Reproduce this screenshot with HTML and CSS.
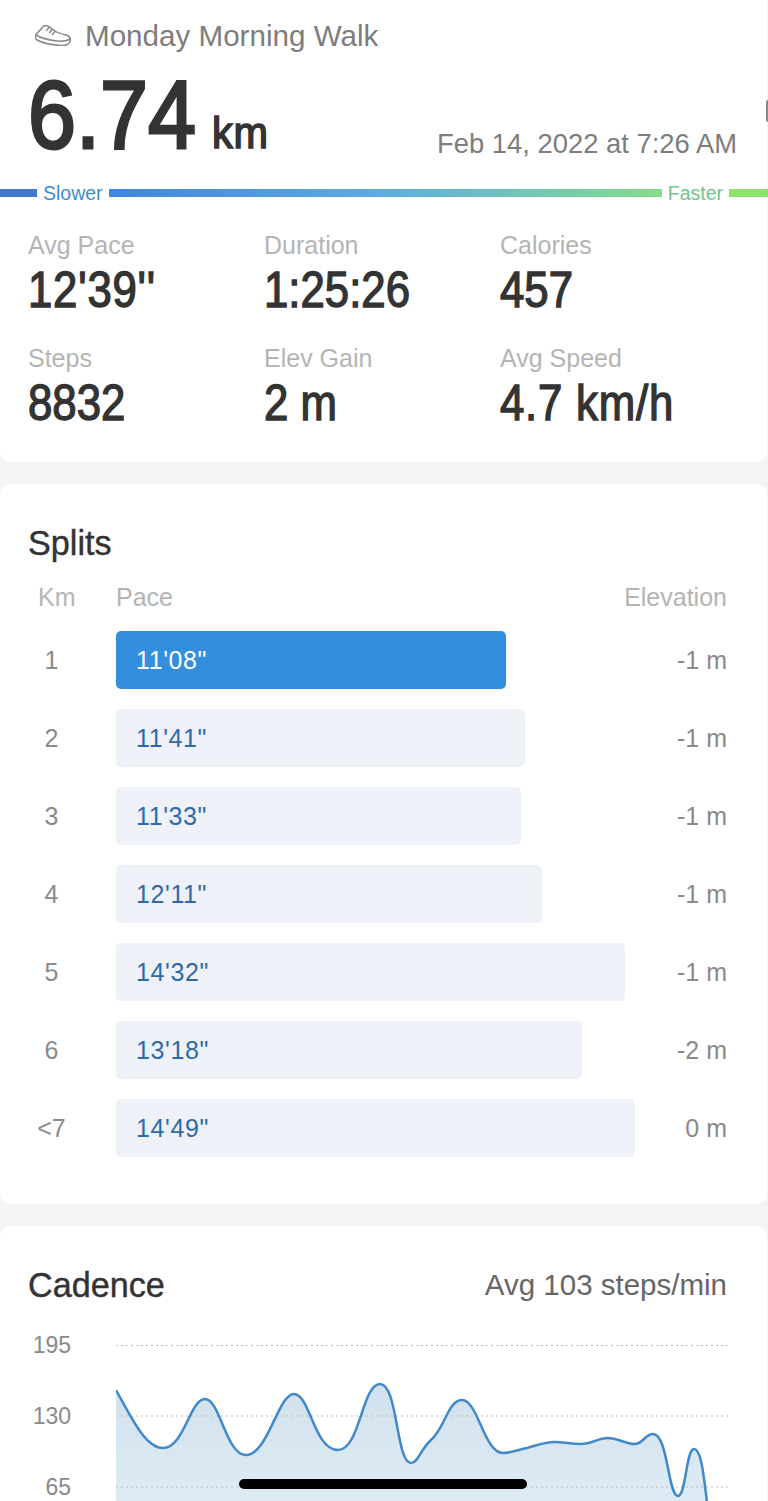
FILE: index.html
```html
<!DOCTYPE html>
<html lang="en">
<head>
    <meta charset="UTF-8">
    <meta name="viewport" content="width=device-width, initial-scale=1.0">
    <title>Monday Morning Walk</title>
    <link rel="stylesheet" href="styles.css">
</head>
<body>
    <div class="card card-summary">
        <div class="activity-title">
            <svg class="shoe" viewBox="0 0 36 21" width="36" height="21" fill="none" stroke="#8a8a8a" stroke-width="1.5" stroke-linejoin="round" stroke-linecap="round">
                <path d="M1 10C2 7 5 6 7 3C8 1 10 0 12 .8C15 2 17 4 20 6C23 8 27 9 31 10C33.500 10.500 35 12 35.500 14"/>
                <path d="M1 10C.2 12 .5 14 2 15C6 17 14 20 26 20.500C31 20.800 35.500 19 35.500 14C32 16 26 16.500 20 15.800C13 15 6 13 1 10Z"/>
                <path d="M14 2.500L11.500 5.500M17 4.500L14.500 7.500M20 6.500L17.500 9.500"/>
            </svg>
            <span>Monday Morning Walk</span>
        </div>
        <div class="hero">
            <div class="hero-distance">
                <span class="hero-num">6.74</span>
                <span class="hero-unit">km</span>
            </div>
            <div class="hero-date">Feb 14, 2022 at 7:26 AM</div>
        </div>
        <div class="pace-bar">
            <div class="pace-end pace-end-slow"></div>
            <span class="pace-label pace-label-slow">Slower</span>
            <div class="pace-gradient"></div>
            <span class="pace-label pace-label-fast">Faster</span>
            <div class="pace-end pace-end-fast"></div>
        </div>
        <div class="stats">
            <div class="stat">
                <div class="stat-label">Avg Pace</div>
                <div class="stat-value stat-value-wide">12'39''</div>
            </div>
            <div class="stat">
                <div class="stat-label">Duration</div>
                <div class="stat-value">1:25:26</div>
            </div>
            <div class="stat">
                <div class="stat-label">Calories</div>
                <div class="stat-value">457</div>
            </div>
            <div class="stat">
                <div class="stat-label">Steps</div>
                <div class="stat-value">8832</div>
            </div>
            <div class="stat">
                <div class="stat-label">Elev Gain</div>
                <div class="stat-value">2 m</div>
            </div>
            <div class="stat">
                <div class="stat-label">Avg Speed</div>
                <div class="stat-value stat-value-wide">4.7 km/h</div>
            </div>
        </div>
    </div>

    <div class="card card-splits">
        <h2 class="card-title">Splits</h2>
        <div class="split-head">
            <span class="col-km">Km</span>
            <span class="col-pace">Pace</span>
            <span class="col-elev">Elevation</span>
        </div>
        <div class="split-row">
            <span class="col-km">1</span>
            <div class="col-pace"><div class="split-bar split-bar-best" style="width: 390px">11'08"</div></div>
            <span class="col-elev">-1 m</span>
        </div>
        <div class="split-row">
            <span class="col-km">2</span>
            <div class="col-pace"><div class="split-bar" style="width: 409px">11'41"</div></div>
            <span class="col-elev">-1 m</span>
        </div>
        <div class="split-row">
            <span class="col-km">3</span>
            <div class="col-pace"><div class="split-bar" style="width: 405px">11'33"</div></div>
            <span class="col-elev">-1 m</span>
        </div>
        <div class="split-row">
            <span class="col-km">4</span>
            <div class="col-pace"><div class="split-bar" style="width: 426px">12'11"</div></div>
            <span class="col-elev">-1 m</span>
        </div>
        <div class="split-row">
            <span class="col-km">5</span>
            <div class="col-pace"><div class="split-bar" style="width: 509px">14'32"</div></div>
            <span class="col-elev">-1 m</span>
        </div>
        <div class="split-row">
            <span class="col-km">6</span>
            <div class="col-pace"><div class="split-bar" style="width: 466px">13'18"</div></div>
            <span class="col-elev">-2 m</span>
        </div>
        <div class="split-row">
            <span class="col-km">&lt;7</span>
            <div class="col-pace"><div class="split-bar" style="width: 519px">14'49"</div></div>
            <span class="col-elev">0 m</span>
        </div>
    </div>

    <div class="card card-cadence">
        <div class="cadence-head">
            <h2 class="card-title">Cadence</h2>
            <span class="cadence-avg">Avg 103 steps/min</span>
        </div>
        <div class="chart">
            <div class="chart-axis">
                <span>195</span>
                <span>130</span>
                <span>65</span>
            </div>
            <svg class="chart-plot" viewBox="116 1340 612 175" width="612" height="175">
                <defs>
                    <linearGradient id="cadenceFill" x1="0" y1="0" x2="0" y2="1">
                        <stop offset="0" stop-color="#d1e1ed"/>
                        <stop offset="1" stop-color="#dfecf4"/>
                    </linearGradient>
                </defs>
                <path d="M116 1390C130 1415 145 1448 163 1448C184 1448 190 1399 205 1399C220 1399 226 1455 246 1455C268 1455 278 1394 294 1394C310 1394 314 1450 338 1450C360 1450 362 1384 380 1384C398 1384 396 1463 411 1463C418 1463 420 1450 431 1440C445 1428 448 1400 462 1400C478 1400 484 1453 503 1453C510 1453 518 1450 527 1448C538 1445 545 1442 554 1442C565 1442 570 1444 581 1444C592 1444 598 1438 608 1438C618 1438 625 1444 635 1444C643 1444 645 1434 653 1434C668 1434 668 1496 678 1496C686 1496 686 1449 694 1449C702 1449 704 1480 708 1510L116 1510Z" fill="url(#cadenceFill)"/>
                <path d="M116 1345.500H728M116 1416H728M116 1487H728" stroke="#bdbdbd" stroke-width="1" stroke-dasharray="2 3"/>
                <path d="M116 1390C130 1415 145 1448 163 1448C184 1448 190 1399 205 1399C220 1399 226 1455 246 1455C268 1455 278 1394 294 1394C310 1394 314 1450 338 1450C360 1450 362 1384 380 1384C398 1384 396 1463 411 1463C418 1463 420 1450 431 1440C445 1428 448 1400 462 1400C478 1400 484 1453 503 1453C510 1453 518 1450 527 1448C538 1445 545 1442 554 1442C565 1442 570 1444 581 1444C592 1444 598 1438 608 1438C618 1438 625 1444 635 1444C643 1444 645 1434 653 1434C668 1434 668 1496 678 1496C686 1496 686 1449 694 1449C702 1449 704 1480 708 1510" fill="none" stroke="#4189cb" stroke-width="2.500"/>
            </svg>
        </div>
    </div>

    <div class="edge-mark"></div>
    <div class="home-indicator"></div>
</body>
</html>
```

FILE: styles.css
```css
html, body {
    height: 1501px;
    margin: 0;
    padding: 0;
    overflow: hidden;
    font-family: "Liberation Sans", Arial, sans-serif;
    background-color: #f4f4f4;
}

body {
    position: relative;
    display: flex;
    flex-direction: column;
    gap: 22px;
}

.card {
    background-color: #fff;
    width: 767px;
    border-radius: 10px;
    box-sizing: border-box;
    flex: none;
}

.card-summary {
    height: 462px;
    border-radius: 0 0 10px 10px;
    padding-top: 17px;
}

.activity-title {
    display: flex;
    align-items: center;
    gap: 14px;
    height: 37px;
    padding-left: 35px;
    font-size: 29.6px;
    color: #7d7d7d;
}

.shoe {
    flex: none;
}

.hero {
    display: flex;
    justify-content: space-between;
    align-items: flex-end;
    height: 121px;
    padding: 0 30px 0 28px;
}

.hero-distance {
    display: flex;
    align-items: baseline;
    white-space: nowrap;
    padding-bottom: 7px;
}

.hero-num {
    display: inline-block;
    width: 184px;
    font-size: 97px;
    line-height: 107px;
    color: #333;
    -webkit-text-stroke: 3px #333;
    transform: scaleX(.89);
    transform-origin: left;
}

.hero-unit {
    display: inline-block;
    font-size: 44px;
    letter-spacing: 1px;
    color: #333;
    -webkit-text-stroke: 1.6px #333;
    transform: scaleX(.94);
    transform-origin: left;
}

.hero-date {
    font-size: 27.4px;
    line-height: 34px;
    color: #7d7d7d;
    padding-bottom: 14px;
    white-space: nowrap;
}

.pace-bar {
    display: flex;
    align-items: center;
    height: 24px;
    margin-top: 6px;
    width: 768px;
}

.pace-end {
    height: 8px;
}

.pace-end-slow {
    width: 37px;
    background-color: #3f77d0;
}

.pace-end-fast {
    width: 39px;
    background-color: #8de368;
}

.pace-gradient {
    flex: 1;
    height: 8px;
    background: linear-gradient(to right, #3f86de, #5dade2 50%, #6fc7b8 75%, #84dc8a);
}

.pace-label {
    font-size: 19.5px;
    padding: 0 6px;
}

.pace-label-slow {
    color: #3f8ccd;
}

.pace-label-fast {
    color: #75c38a;
}

.stats {
    display: grid;
    grid-template-columns: 236px 236px 1fr;
    row-gap: 22px;
    padding: 25px 0 0 28px;
}

.stat-label {
    font-size: 25px;
    line-height: 30px;
    color: #b4b4b4;
}

.stat-value {
    font-size: 50px;
    line-height: 62px;
    color: #333;
    -webkit-text-stroke: 1.4px #333;
    white-space: nowrap;
    transform: scaleX(.875);
    transform-origin: left;
    margin-top: -1px;
}

.stat-value-wide {
    letter-spacing: .9px;
}

.card-splits {
    height: 720px;
    padding-top: 40px;
}

.card-title {
    margin: 0;
    font-size: 34.2px;
    line-height: 38px;
    font-weight: normal;
    color: #333;
    -webkit-text-stroke: .4px #333;
}

.card-splits .card-title {
    padding-left: 28px;
}

.split-head, .split-row {
    display: flex;
    align-items: center;
    padding-right: 40px;
    font-size: 25px;
}

.split-head {
    height: 30px;
    margin-top: 20px;
    color: #b4b4b4;
}

.split-row {
    height: 58px;
    margin-top: 20px;
    color: #8a8a8a;
}

.split-head + .split-row {
    margin-top: 19px;
}

.col-km {
    width: 103px;
    text-align: center;
    flex: none;
}

.split-head .col-km {
    width: 65px;
    padding-left: 38px;
    text-align: left;
}

.col-pace {
    flex: 1;
    padding-left: 13px;
}

.col-elev {
    flex: none;
    text-align: right;
}

.split-bar {
    height: 58px;
    line-height: 58px;
    padding-left: 20px;
    box-sizing: border-box;
    border-radius: 5px;
    background-color: #eef1f8;
    color: #2f6aa8;
    letter-spacing: .6px;
}

.split-bar-best {
    background-color: #338fde;
    color: #fff;
}

.card-cadence {
    height: 275px;
    padding-top: 40px;
    border-radius: 10px 10px 0 0;
    overflow: hidden;
}

.cadence-head {
    display: flex;
    justify-content: space-between;
    align-items: center;
    padding: 0 40px 0 28px;
}

.cadence-avg {
    font-size: 29.5px;
    color: #666;
}

.chart {
    display: flex;
    margin-top: 36px;
}

.chart-axis {
    display: flex;
    flex-direction: column;
    gap: 41px;
    width: 71px;
    margin: -10px 45px 0 0;
    text-align: right;
    font-size: 23px;
    line-height: 30px;
    color: #8a8a8a;
    flex: none;
}

.chart-plot {
    flex: none;
    display: block;
}

/* sits over the page edge, same as the phone screenshot */
.edge-mark {
    position: absolute;
    right: -2px;
    top: 100px;
    width: 4px;
    height: 22px;
    border-radius: 2px;
    background-color: #888;
}

.home-indicator {
    position: absolute;
    left: 239px;
    top: 1479px;
    width: 288px;
    height: 10px;
    border-radius: 5px;
    background-color: #000;
}
```
